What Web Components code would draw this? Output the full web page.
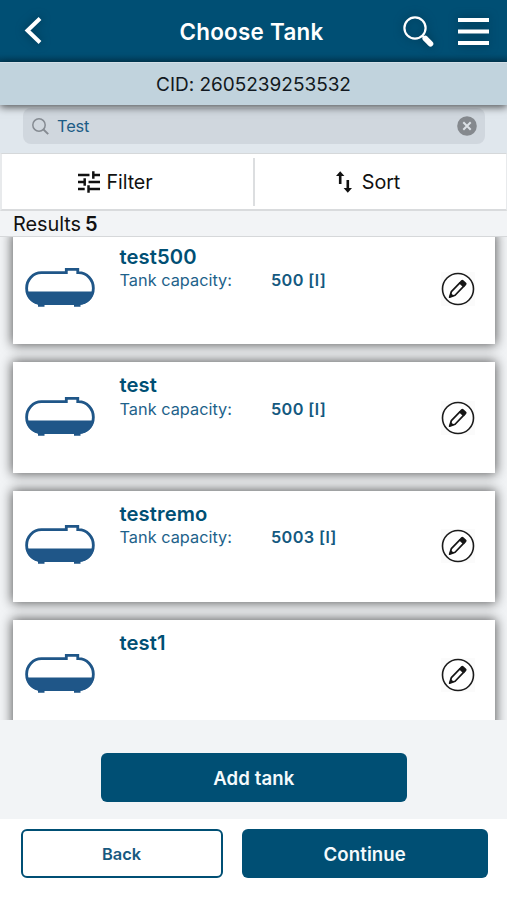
<!DOCTYPE html>
<html lang="en"><head><meta charset="utf-8"><title>Choose Tank</title>
<style>
html,body{margin:0;height:100%;overflow:hidden}
body{font-family:Inter,"Liberation Sans",sans-serif;--brand:#004f74;color:#111820}
</style></head><body>
<tank-page></tank-page>
<script>
const define=(name,html,setup)=>customElements.define(name,class extends HTMLElement{
  connectedCallback(){
    if(this.shadowRoot)return;
    const t=document.createElement('template');
    t.innerHTML=html;
    this.attachShadow({mode:'open'}).append(t.content.cloneNode(true));
    if(setup)setup(this,this.shadowRoot);
  }
});

define('app-header',`<style>
:host{display:grid;grid-template-columns:150px 1fr 150px;align-items:center;height:62px;box-sizing:border-box;padding-top:1px;background:linear-gradient(#004f74 0 54px,#00405f 62px);color:#fff}
h1{margin:0;font-size:22.4px;font-weight:600;letter-spacing:.28px;text-align:center;white-space:nowrap;padding-right:4px}
svg{display:block;filter:drop-shadow(0 0 5px #00344d)}
.back{margin-left:22px}
.right{display:flex;align-items:center;justify-content:flex-end;gap:24px;padding-right:18px}
</style>
<svg class="back" width="22" height="30" viewBox="0 0 22 30"><path d="M18 1.500 5.500 13.500 18 25.500" fill="none" stroke="#fff" stroke-width="4"/></svg>
<h1><slot></slot></h1>
<div class="right">
<svg width="32" height="32" viewBox="0 0 32 32"><circle cx="13" cy="12" r="10.6" fill="none" stroke="#fff" stroke-width="2.2"/><path d="m20 19.500 3 3" stroke="#fff" stroke-width="2"/><path d="m23.300 22.500 5.200 5.200" stroke="#fff" stroke-width="5.600" stroke-linecap="round"/></svg>
<svg width="31" height="30" viewBox="0 0 31 30"><path d="M0 3h31M0 14.500h31M0 26h31" stroke="#fff" stroke-width="4"/></svg>
</div>`);

define('customer-bar',`<style>
:host{display:flex;align-items:center;justify-content:center;height:43px;box-sizing:border-box;background:#c1d3dd;font-size:19px;letter-spacing:-.02px;box-shadow:0 2px 8px #000a;position:relative;border-top:1px solid #d3dfe6;z-index:1}
</style><slot></slot>`);

define('search-field',`<style>
:host{display:block;height:48px;padding:3px 22px 0 23px;box-sizing:border-box;background:#e0e7ed}
.box{display:flex;align-items:center;height:36px;box-sizing:border-box;border-radius:8px;background:#d0d7de;padding:0 8px 0 9px;font-size:16.4px;letter-spacing:-.15px;color:#1c5c86}
.q{flex:1;padding-left:8px;margin-top:-1px}
svg{display:block}
</style>
<div class="box"><svg width="17" height="17" viewBox="0 0 17 17" fill="none" stroke="#858b92" stroke-width="1.500"><circle cx="7" cy="7" r="6.200"/><path d="m11.500 11.500 4.700 4.700" stroke-width="1.900"/></svg>
<span class="q"><slot></slot></span>
<svg width="20" height="20" viewBox="0 0 20 20"><circle cx="10" cy="10" r="9.800" fill="#85898e"/><path d="m6.300 6.300 7.400 7.400m0-7.400-7.400 7.400" stroke="#dce1e6" stroke-width="2"/></svg></div>`);

define('tool-bar',`<style>
:host{display:grid;grid-template-columns:1fr 1fr;height:58px;box-sizing:border-box;background:#fff;border:1px solid #d9dcde;border-width:1px 1px 2px 2px;border-color:#d5d8da #e8eaec #d9dbdd #e8eaec;color:#111}
div{display:flex;align-items:center;justify-content:center;font-size:19.700px;letter-spacing:-.08px;gap:6px;padding:0 25px 0 0}
.sort{border-left:2px solid #dcdee0;margin:4px 0 3px -1px;gap:10px;padding:0 25px 0 0;font-size:19.800px}
svg{display:block}
</style>
<div><svg width="22" height="22" viewBox="0 0 23 22" preserveAspectRatio="none" fill="none" stroke="#111" stroke-width="2.600"><path d="M0 4h12M15 4h8M16 .3v7.400M0 11h7M11 11h12M7 7.300v7.400M0 18h7M11 18h12M11 14.300v7.400"/></svg><slot name="filter"></slot></div>
<div class="sort"><svg width="16" height="22" viewBox="0 0 16 22"><path d="M4.200 13V3M11.800 9v9" stroke="#111" stroke-width="2.600"/><path d="M0 5 4.200.3 8.400 5zM7.600 17.100h8.400L11.800 21.800z" fill="#111"/></svg><slot name="sort"></slot></div>`);

define('result-count',`<style>
:host{display:flex;align-items:center;gap:4px;height:26px;box-sizing:border-box;padding:1px 0 0 13px;background:#f2f4f6;border-bottom:1px solid #d6d8da;font-size:19.900px;letter-spacing:-.05px;color:#111}
b{font-weight:600;font-size:20px}
</style><slot></slot><b><slot name="count"></slot></b>`);

define('tank-icon',`<style>:host{display:block}svg{display:block}</style>
<svg width="70" height="40" viewBox="0 0 70 40"><path d="M17 4.700h24.800V1.400h11.400v3.300h.8a14.700 15.500 0 0 1 0 31H17a14.700 15.500 0 0 1 0-31z" fill="#fff" stroke="#1f5688" stroke-width="2.800" transform="translate(-.7 0) scale(1.005 1)"/><path d="M1.300 23.500h67.600c-1 7-6 13-14.400 13H15.700C7.500 36.500 2 30.500 1.300 23.500z" fill="#1f5688"/><path d="M13 35.500h6.500v3.300H13zM49 35.500h6.500v3.300H49z" fill="#1f5688"/></svg>`);

define('edit-button',`<style>:host{display:block;background:#fbfbfb}svg{display:block}</style>
<svg width="34" height="34" viewBox="0 0 34 34"><circle cx="17" cy="17" r="15.500" fill="#fff" stroke="#1b1b1b" stroke-width="1.600"/><g transform="translate(8.200 25.600) rotate(-46)"><path d="m.6 0 5.200-2.600H18v5.200H5.800z" fill="#fff" stroke="#161616" stroke-width="1.700" stroke-linejoin="round"/><path d="M17.800-3.400h3q1.600 0 1.600 1.500v3.800q0 1.500-1.600 1.500h-3zM0 0l4.500-2.300v4.600z" fill="#161616"/></g></svg>`);

define('tank-card',`<style>
:host{display:grid;grid-template-columns:106.500px 1fr 34px;height:110.700px;box-sizing:border-box;padding:0 20px 0 0;background:#fff;box-shadow:0 0 11px 1px #000000a0;color:var(--brand);flex:none}
tank-icon{margin:34.500px 0 0 12px}
h2{margin:11.200px 0 0;line-height:24px;font-size:20.200px;font-weight:600;letter-spacing:.1px}
dl{display:grid;grid-template-columns:151.500px 1fr;margin:1.400px 0 0;font-size:16.300px;line-height:20px;color:#1d628a}
dt{letter-spacing:.02px}dd{margin:0;font-weight:600;letter-spacing:.35px;color:#14597f}
edit-button{margin-top:38.500px;height:34px}
</style>
<tank-icon></tank-icon><div><h2></h2><dl><dt></dt><dd></dd></dl></div><edit-button></edit-button>`,(el,r)=>{
  r.querySelector('h2').textContent=el.getAttribute('name');
  const c=el.getAttribute('capacity');
  if(c){r.querySelector('dt').textContent='Tank capacity:';r.querySelector('dd').textContent=c;}
  else r.querySelector('dl').remove();
});

define('tank-list',`<style>
:host{display:flex;flex-direction:column;justify-content:flex-end;gap:18px;height:483px;box-sizing:border-box;padding:0 12.500px 0 13px;overflow:hidden;background:#f2f4f6}
::slotted(:last-child){margin-bottom:-10.200px}
</style><slot></slot>`);

define('push-button',`<style>
:host{display:flex;align-items:center;justify-content:center;height:49px;box-sizing:border-box;border-radius:6px;background:var(--brand);color:#f4fafc;font-size:18.600px;font-weight:600;letter-spacing:.1px}
:host([outline]){background:#fff;color:#17597f;border:2px solid var(--brand);font-size:16.400px;letter-spacing:0}
</style><slot></slot>`);

define('tank-page',`<style>
:host{display:flex;flex-direction:column;width:507px;height:900px;background:#fff;overflow:hidden}
.add{height:98.500px;box-sizing:border-box;padding:33.300px 100.500px 0 101px;background:#f2f4f6}
.nav{display:grid;grid-template-columns:202px 245.500px;gap:19.500px;padding:10.500px 0 0 20.500px}
</style>
<app-header>Choose Tank</app-header>
<customer-bar>CID: 2605239253532</customer-bar>
<search-field>Test</search-field>
<tool-bar><span slot="filter">Filter</span><span slot="sort">Sort</span></tool-bar>
<result-count>Results<span slot="count">5</span></result-count>
<tank-list><tank-card name="test500" capacity="500 [l]"></tank-card><tank-card name="test" capacity="500 [l]"></tank-card><tank-card name="testremo" capacity="5003 [l]"></tank-card><tank-card name="test1"></tank-card></tank-list>
<div class="add"><push-button>Add tank</push-button></div>
<div class="nav"><push-button outline>Back</push-button><push-button>Continue</push-button></div>`);
</script></body></html>
